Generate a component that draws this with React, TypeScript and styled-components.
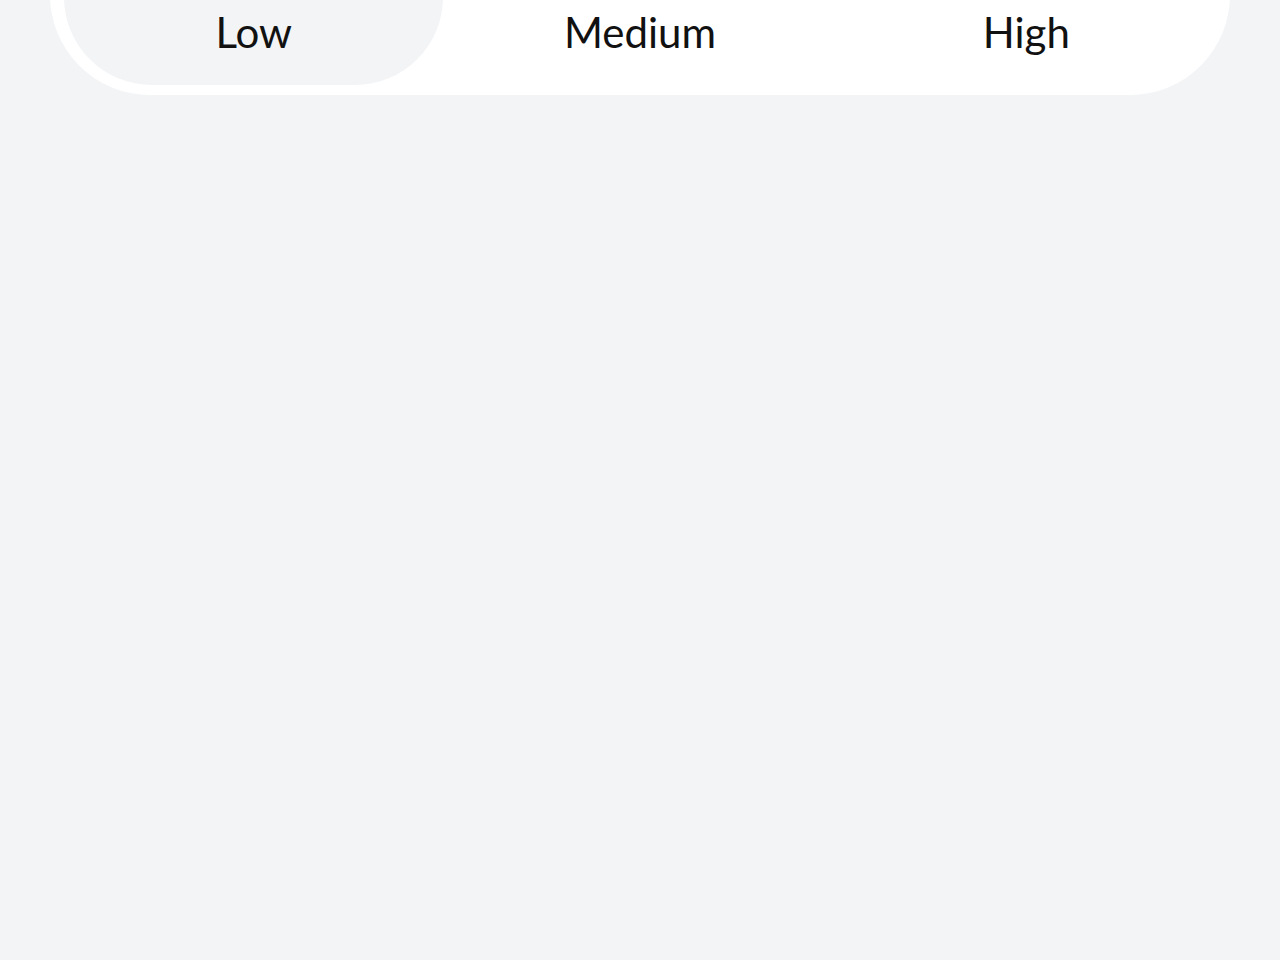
import React, { useState } from "react";
import styled, { createGlobalStyle } from "styled-components";

const Global = createGlobalStyle`
  html, body { margin: 0; padding: 0; background: #f2f4f6; }
  body { font-family: "Lato", "Noto Sans", sans-serif; overflow: hidden; }
`;

const Page = styled.div`
  width: 1280px;
  height: 960px;
  padding: 0 50px;
  box-sizing: border-box;
`;

const Control = styled.div`
  margin-top: -110px;
  height: 205px;
  box-sizing: border-box;
  padding: 14px 14px 10px;
  background: #ffffff;
  border-radius: 100px;
  display: grid;
  grid-template-columns: repeat(3, 1fr);
  column-gap: 7px;
`;

const Segment = styled.button<{ $active: boolean }>`
  border: none;
  margin: 0;
  padding: 0 0 28px;
  background: ${(p) => (p.$active ? "#f2f4f6" : "transparent")};
  border-radius: 88px;
  font-family: "Lato", "Noto Sans", sans-serif;
  font-size: 42px;
  line-height: 50px;
  font-weight: 400;
  color: #111111;
  display: flex;
  align-items: flex-end;
  justify-content: center;
  cursor: pointer;
`;

export default function App() {
  const [value, setValue] = useState("Low");
  const options = ["Low", "Medium", "High"];
  return (
    <Page>
      <Global />
      <Control>
        {options.map((o) => (
          <Segment key={o} $active={value === o} onClick={() => setValue(o)}>
            {o}
          </Segment>
        ))}
      </Control>
    </Page>
  );
}
